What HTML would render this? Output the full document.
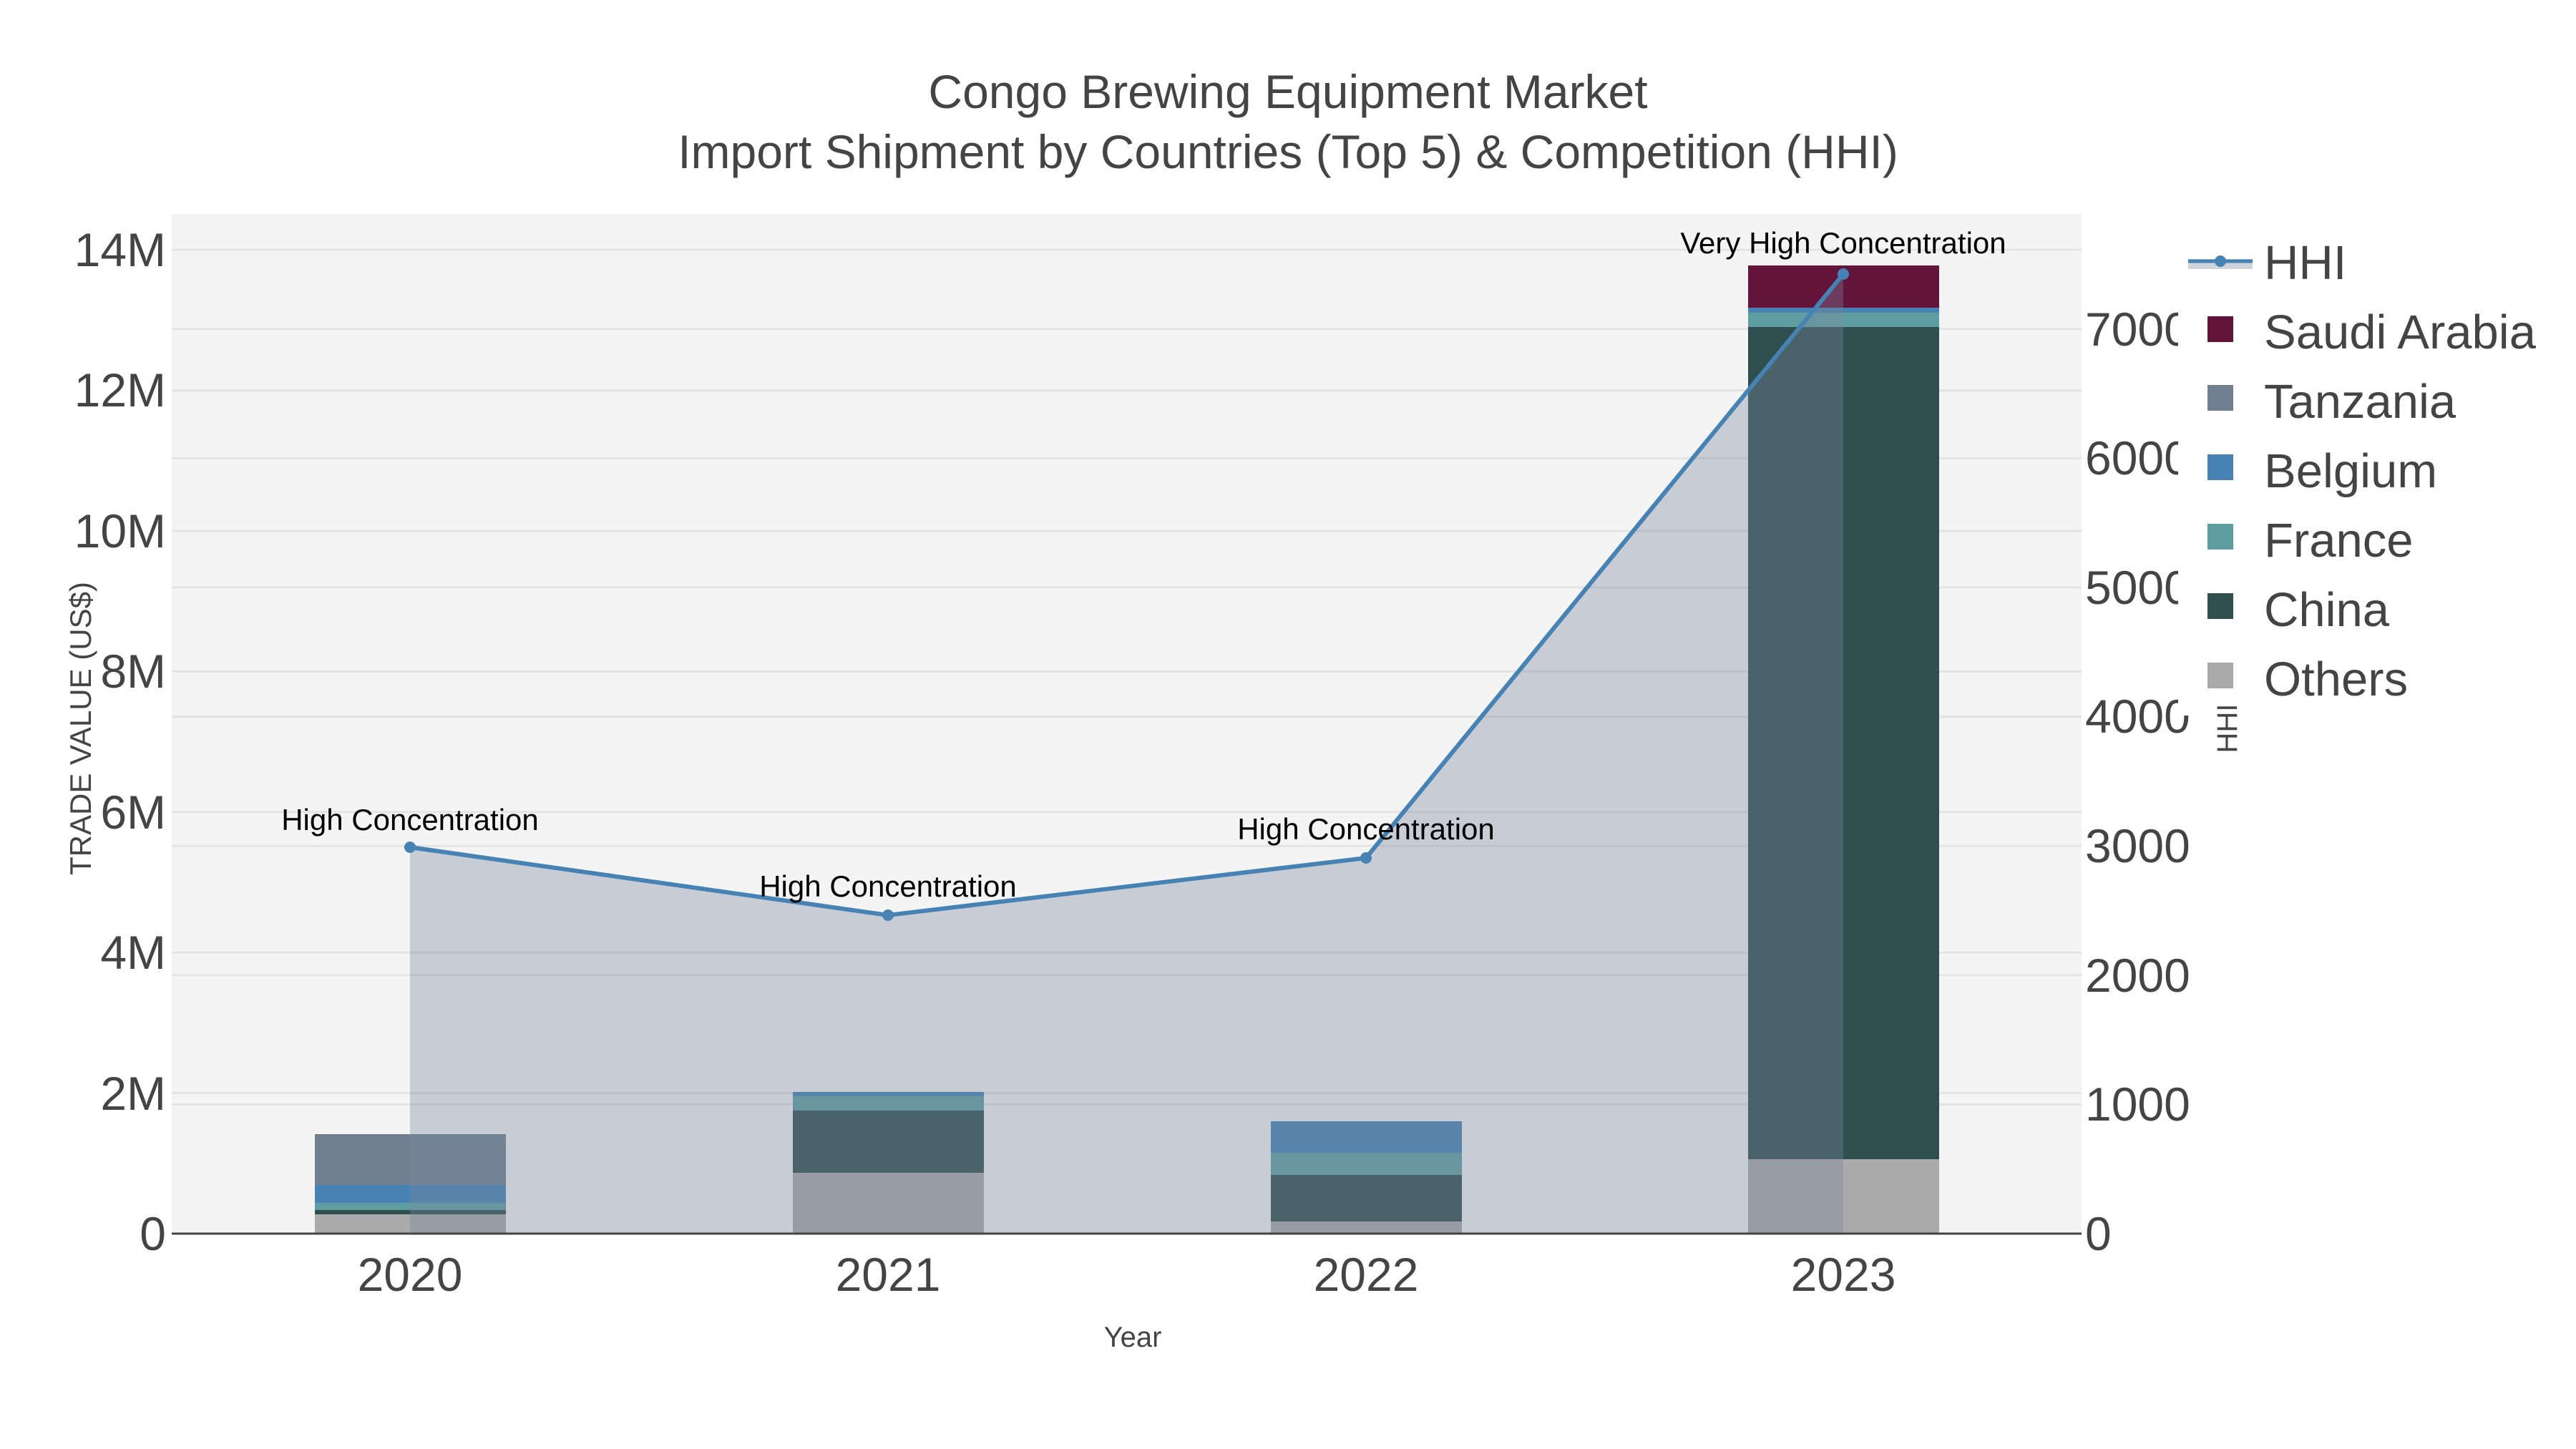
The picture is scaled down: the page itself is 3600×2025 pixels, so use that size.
<!DOCTYPE html>
<html><head><meta charset="utf-8"><style>
html,body{margin:0;padding:0;background:#fff;}
svg{display:block;font-family:"Liberation Sans",sans-serif;}
</style></head><body>
<svg width="3600" height="2025" viewBox="0 0 3600 2025" xmlns="http://www.w3.org/2000/svg">
<rect width="3600" height="2025" fill="#fff"/>
<text x="1800" y="151" font-size="66" fill="#444" text-anchor="middle">Congo Brewing Equipment Market</text>
<text x="1800" y="235" font-size="66" fill="#444" text-anchor="middle">Import Shipment by Countries (Top 5) &amp; Competition (HHI)</text>
<rect x="240" y="299" width="2669" height="1425" fill="#f4f4f4"/>
<g stroke="#e3e3e3" stroke-width="3">
<line x1="240" x2="2909" y1="1527.6" y2="1527.6"/><line x1="240" x2="2909" y1="1331.2" y2="1331.2"/>
<line x1="240" x2="2909" y1="1134.8" y2="1134.8"/><line x1="240" x2="2909" y1="938.4" y2="938.4"/>
<line x1="240" x2="2909" y1="742" y2="742"/><line x1="240" x2="2909" y1="545.6" y2="545.6"/>
<line x1="240" x2="2909" y1="349.2" y2="349.2"/>
<line x1="240" x2="2909" y1="1543.4" y2="1543.4"/><line x1="240" x2="2909" y1="1362.8" y2="1362.8"/>
<line x1="240" x2="2909" y1="1182.2" y2="1182.2"/><line x1="240" x2="2909" y1="1001.6" y2="1001.6"/>
<line x1="240" x2="2909" y1="821" y2="821"/><line x1="240" x2="2909" y1="640.4" y2="640.4"/>
<line x1="240" x2="2909" y1="459.8" y2="459.8"/>
</g>
<g>
<rect x="440" y="1697" width="267" height="27" fill="#aaaaaa"/>
<rect x="440" y="1691" width="267" height="6" fill="#2f4f4f"/>
<rect x="440" y="1681" width="267" height="10" fill="#5f9ea0"/>
<rect x="440" y="1656" width="267" height="25" fill="#4682b4"/>
<rect x="440" y="1585" width="267" height="71" fill="#708090"/>

<rect x="1108" y="1639" width="267" height="85" fill="#aaaaaa"/>
<rect x="1108" y="1552" width="267" height="87" fill="#2f4f4f"/>
<rect x="1108" y="1532" width="267" height="20" fill="#5f9ea0"/>
<rect x="1108" y="1526" width="267" height="6" fill="#4682b4"/>

<rect x="1776" y="1707" width="267" height="17" fill="#aaaaaa"/>
<rect x="1776" y="1642" width="267" height="65" fill="#2f4f4f"/>
<rect x="1776" y="1611" width="267" height="31" fill="#5f9ea0"/>
<rect x="1776" y="1567" width="267" height="44" fill="#4682b4"/>

<rect x="2443" y="1620" width="267" height="104" fill="#aaaaaa"/>
<rect x="2443" y="457" width="267" height="1163" fill="#2f4f4f"/>
<rect x="2443" y="437" width="267" height="20" fill="#5f9ea0"/>
<rect x="2443" y="430" width="267" height="7" fill="#4682b4"/>
<rect x="2443" y="371" width="267" height="59" fill="#63143a"/>
</g>
<polygon points="573,1184 1241,1279 1909,1199 2576,383 2576,1724 573,1724" fill="rgba(122,133,155,0.36)"/>
<polyline points="573,1184 1241,1279 1909,1199 2576,383" fill="none" stroke="#4682b4" stroke-width="6"/>
<g fill="#4682b4"><circle cx="573" cy="1184" r="8"/><circle cx="1241" cy="1279" r="8"/><circle cx="1909" cy="1199" r="8"/><circle cx="2576" cy="383" r="8"/></g>
<line x1="240" x2="2909" y1="1724" y2="1724" stroke="#444" stroke-width="3"/>
<g font-size="42" fill="#000" text-anchor="middle">
<text x="573" y="1160">High Concentration</text>
<text x="1241" y="1253">High Concentration</text>
<text x="1909" y="1173">High Concentration</text>
<text x="2576" y="354">Very High Concentration</text>
</g>
<g font-size="66" fill="#444" text-anchor="end">
<text x="232" y="1747">0</text><text x="232" y="1551">2M</text><text x="232" y="1354">4M</text>
<text x="232" y="1158">6M</text><text x="232" y="961">8M</text><text x="232" y="765">10M</text>
<text x="232" y="568">12M</text><text x="232" y="372">14M</text>
</g>
<g font-size="66" fill="#444">
<text x="2914" y="1747">0</text><text x="2914" y="1566">1000</text><text x="2914" y="1386">2000</text>
<text x="2914" y="1205">3000</text><text x="2914" y="1024">4000</text><text x="2914" y="844">5000</text>
<text x="2914" y="663">6000</text><text x="2914" y="483">7000</text>
</g>
<g font-size="66" fill="#444" text-anchor="middle">
<text x="573" y="1804">2020</text><text x="1241" y="1804">2021</text><text x="1909" y="1804">2022</text><text x="2576" y="1804">2023</text>
</g>
<text x="1583" y="1882" font-size="40" fill="#444" text-anchor="middle">Year</text>
<text transform="translate(127,1018) rotate(-90)" font-size="42" fill="#444" text-anchor="middle">TRADE VALUE (US$)</text>
<rect x="3044" y="300" width="556" height="700" fill="#fff"/>
<rect x="3060" y="1000" width="540" height="60" fill="#fff"/>
<text transform="translate(3126,1018) rotate(-90)" font-size="40" fill="#444" text-anchor="middle">HHI</text>
<rect x="3058" y="362" width="90" height="14" fill="rgba(122,133,155,0.36)"/>
<line x1="3058" x2="3148" y1="365" y2="365" stroke="#4682b4" stroke-width="5"/>
<circle cx="3103" cy="365" r="8" fill="#4682b4"/>
<rect x="3085" y="442" width="36" height="36" fill="#63143a"/>
<rect x="3085" y="538" width="36" height="36" fill="#708090"/>
<rect x="3085" y="635" width="36" height="36" fill="#4682b4"/>
<rect x="3085" y="732" width="36" height="36" fill="#5f9ea0"/>
<rect x="3085" y="829" width="36" height="36" fill="#2f4f4f"/>
<rect x="3085" y="926" width="36" height="36" fill="#aaaaaa"/>
<g font-size="67" fill="#444">
<text x="3164" y="390">HHI</text>
<text x="3164" y="487">Saudi Arabia</text>
<text x="3164" y="584">Tanzania</text>
<text x="3164" y="681">Belgium</text>
<text x="3164" y="778">France</text>
<text x="3164" y="875">China</text>
<text x="3164" y="972">Others</text>
</g>
</svg>
</body></html>
